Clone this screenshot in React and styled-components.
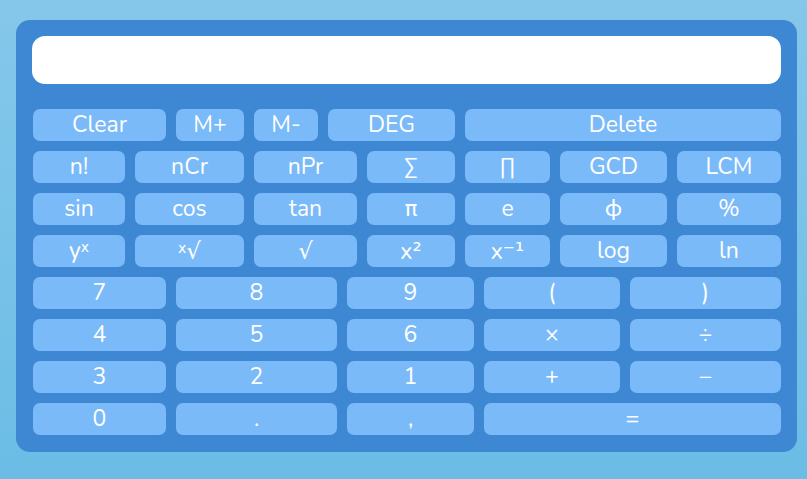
import React from "react";
import styled, { createGlobalStyle } from "styled-components";

const GlobalStyle = createGlobalStyle`
    html, body {
        margin: 0;
        padding: 0;
        height: 100%;
    }
    body {
        background: linear-gradient(180deg, #85c7eb 0%, #6bbde6 100%);
        font-family: "Nunito", Lato, "Open Sans", sans-serif;
    }
`;

// glyphs the main font lacks fall back to DejaVu, as in the original
const Sym = styled.span`
    font-family: "DejaVu Sans", sans-serif;
    font-size: ${(p) => p.$size || "inherit"};
`;

const Sup = styled.sup`
    font-family: "DejaVu Sans", sans-serif;
    font-size: 14px;
    line-height: 0;
    vertical-align: 6px;
`;

const power = (
    <>
        y<Sup>x</Sup>
    </>
);
const root = (
    <>
        <Sup>x</Sup>
        <Sym>√</Sym>
    </>
);
const square = (
    <>
        x<Sym>²</Sym>
    </>
);
const inverse = (
    <>
        x<Sym>⁻¹</Sym>
    </>
);

// column spans per row, on a 12 track grid
const rows = [
    [["Clear", 2], ["M+", 1], ["M-", 1], ["DEG", 3], ["Delete", 5]],
    [["n!", 1], ["nCr", 2], ["nPr", 3], ["∑", 1], ["∏", 2], ["GCD", 2], ["LCM", 1]],
    [["sin", 1], ["cos", 2], ["tan", 3], [<Sym $size="21px">π</Sym>, 1], ["e", 2], ["ϕ", 2], ["%", 1]],
    [[power, 1], [root, 2], [<Sym>√</Sym>, 3], [square, 1], [inverse, 2], ["log", 2], ["ln", 1]],
    [["7", 2], ["8", 3], ["9", 3], ["(", 2], [")", 2]],
    [["4", 2], ["5", 3], ["6", 3], ["×", 2], ["÷", 2]],
    [["3", 2], ["2", 3], ["1", 3], ["+", 2], ["−", 2]],
    [["0", 2], [".", 3], [",", 3], ["=", 4]],
];

const App = () => {
    return (
        <>
            <GlobalStyle />
            <Page>
                <Calculator>
                    <Display />
                    <Keys>
                        {rows.map((row, r) =>
                            row.map(([label, span], i) => (
                                <Key key={`${r}-${i}`} $span={span}>
                                    {label}
                                </Key>
                            ))
                        )}
                    </Keys>
                </Calculator>
            </Page>
        </>
    );
};

const Page = styled.div`
    padding: 20px 10px 0 16px;
`;

const Calculator = styled.div`
    width: 749px;
    background: #3e87d2;
    border-radius: 14px;
    padding: 16px 16px 17px 16px;
`;

const Display = styled.div`
    height: 48px;
    background: white;
    border-radius: 13px;
    margin-bottom: 25px;
`;

const Keys = styled.div`
    display: grid;
    grid-template-columns: 92px 31px 68px 64px 9px 10px 88px 9px 66px 60px 37px 104px;
    grid-auto-rows: 32px;
    gap: 10px;
    padding-left: 1px;
`;

const Key = styled.button`
    grid-column: span ${(p) => p.$span};
    border: none;
    border-radius: 7px;
    background: #7bbaf9;
    color: white;
    font-family: inherit;
    font-size: 23px;
    line-height: 32px;
    padding: 0;
    cursor: pointer;
    white-space: nowrap;
    overflow: hidden;
`;

export default App;
